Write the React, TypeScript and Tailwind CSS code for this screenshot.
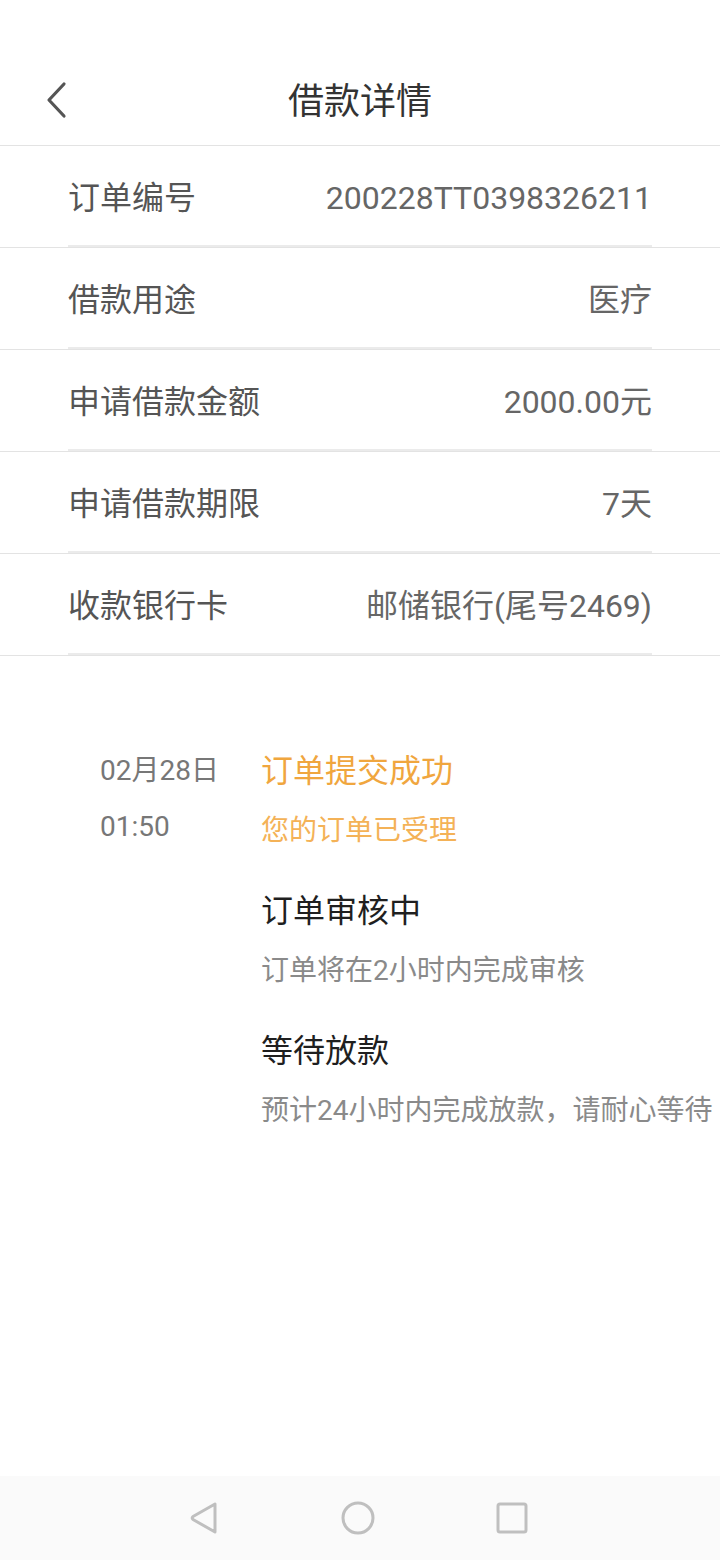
import React from "react";

const rows = [
  { label: "订单编号", value: "200228TT0398326211" },
  { label: "借款用途", value: "医疗" },
  { label: "申请借款金额", value: "2000.00元" },
  { label: "申请借款期限", value: "7天" },
  { label: "收款银行卡", value: "邮储银行(尾号2469)" },
];

const steps = [
  {
    title: "订单提交成功",
    desc: "您的订单已受理",
    titleClass: "text-[#f0a63e]",
    descClass: "text-[#f4b257]",
  },
  {
    title: "订单审核中",
    desc: "订单将在2小时内完成审核",
    titleClass: "text-[#1f1f1f]",
    descClass: "text-[#8a8a8a]",
  },
  {
    title: "等待放款",
    desc: "预计24小时内完成放款，请耐心等待",
    titleClass: "text-[#1f1f1f]",
    descClass: "text-[#8a8a8a]",
  },
];

export default function App() {
  return (
    <div
      className="h-[1560px] w-[720px] bg-white flex flex-col overflow-hidden"
      style={{ fontFamily: '"Roboto", "Noto Sans CJK SC", sans-serif' }}
    >
      {/* header */}
      <div className="h-[146px] pt-[60px] border-b border-[#e3e3e3] relative flex items-center justify-center">
        <button className="absolute left-[40px] top-[80px] w-[32px] h-[40px] flex items-center justify-center">
          <svg width="24" height="38" viewBox="0 0 24 38" fill="none">
            <path
              d="M20 3 L5 19 L20 35"
              stroke="#555"
              strokeWidth="3.2"
              strokeLinecap="round"
              strokeLinejoin="round"
            />
          </svg>
        </button>
        <h1 className="text-[36px] leading-[40px] text-[#333] mb-[2px]">借款详情</h1>
      </div>

      {/* detail rows */}
      <div>
        {rows.map((r) => (
          <div key={r.label} className="border-b border-[#e3e3e3]">
            <div className="mx-[68px] h-[101px] pt-[4px] border-b-2 border-[#ebebeb] flex items-center justify-between">
              <span className="text-[32px] leading-[40px] text-[#555]">{r.label}</span>
              <span className="text-[32px] leading-[40px] text-[#666]">{r.value}</span>
            </div>
          </div>
        ))}
      </div>

      {/* timeline */}
      <div className="mt-[95px] flex">
        <div className="w-[261px] pl-[100px] flex flex-col gap-[16px]">
          <span className="text-[28px] leading-[40px] text-[#777]">02月28日</span>
          <span className="text-[28px] leading-[40px] text-[#777]">01:50</span>
        </div>
        <div className="flex flex-col">
          {steps.map((s) => (
            <div key={s.title} className="flex flex-col gap-[20px] pb-[40px]">
              <span className={`text-[32px] leading-[40px] ${s.titleClass}`}>{s.title}</span>
              <span className={`text-[28px] leading-[40px] whitespace-nowrap ${s.descClass}`}>
                {s.desc}
              </span>
            </div>
          ))}
        </div>
      </div>

      {/* system nav bar */}
      <div className="mt-auto h-[84px] bg-[#fafafa] flex items-center justify-center gap-[118px] pr-[4px]">
        <svg width="36" height="36" viewBox="0 0 36 36" fill="none">
          <path
            d="M29 4 L29 32 L7 19.5 Q5.5 18 7 16.5 Z"
            stroke="#bfbfbf"
            strokeWidth="3"
            strokeLinejoin="round"
          />
        </svg>
        <svg width="36" height="36" viewBox="0 0 36 36" fill="none">
          <circle cx="18" cy="18" r="15" stroke="#bfbfbf" strokeWidth="3" />
        </svg>
        <svg width="36" height="36" viewBox="0 0 36 36" fill="none">
          <rect x="4" y="4" width="28" height="28" rx="2" stroke="#bfbfbf" strokeWidth="3" />
        </svg>
      </div>
    </div>
  );
}
